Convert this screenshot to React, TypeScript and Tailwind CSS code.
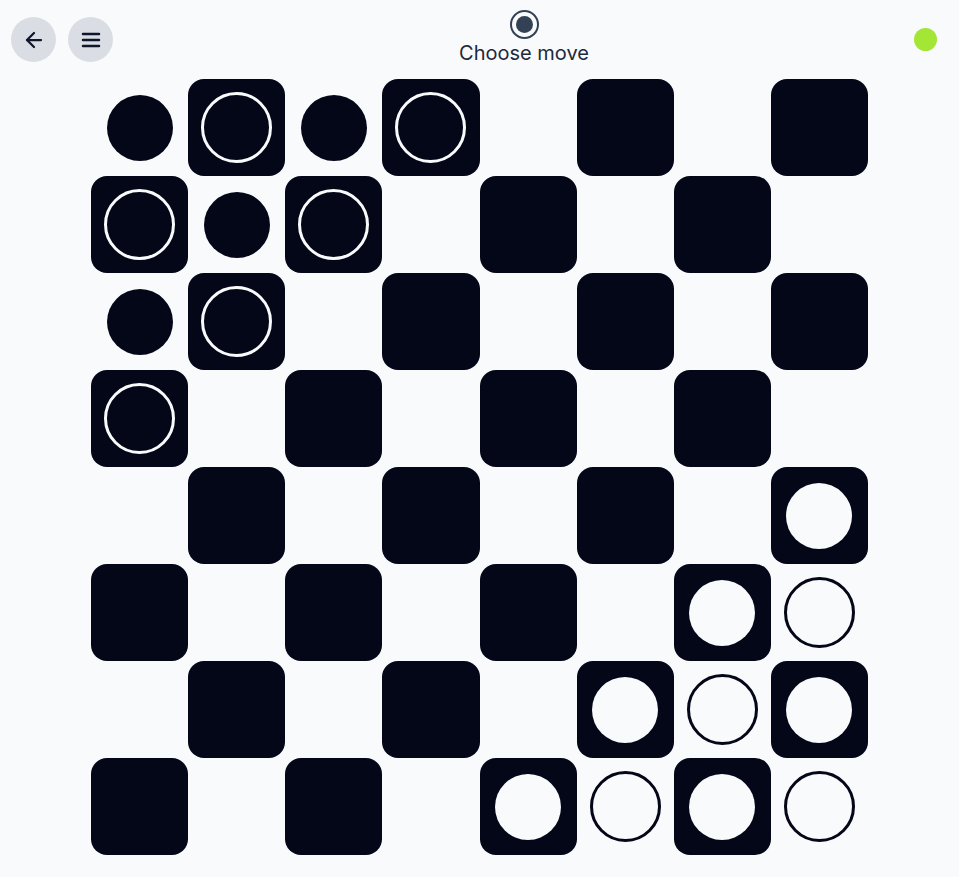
import { ArrowLeft } from "lucide-react";

type Piece = "b" | "w" | null;

// starting layout seen in the screenshot (row 0 = top)
const board: Piece[][] = [
  ["b", "b", "b", "b", null, null, null, null],
  ["b", "b", "b", null, null, null, null, null],
  ["b", "b", null, null, null, null, null, null],
  ["b", null, null, null, null, null, null, null],
  [null, null, null, null, null, null, null, "w"],
  [null, null, null, null, null, null, "w", "w"],
  [null, null, null, null, null, "w", "w", "w"],
  [null, null, null, null, "w", "w", "w", "w"],
];

function Cell({ piece, dark }: { piece: Piece; dark: boolean }) {
  let inner = null;
  if (piece) {
    const same = (piece === "b") === dark;
    if (same) {
      inner = (
        <div
          className={
            "h-[71px] w-[71px] rounded-full border-[3px] " +
            (dark ? "border-[#f8fafc]" : "border-[#030718]")
          }
        />
      );
    } else {
      inner = (
        <div
          className={
            "h-[66px] w-[66px] rounded-full " + (dark ? "bg-[#f8fafc]" : "bg-[#030718]")
          }
        />
      );
    }
  }
  return (
    <div
      className={
        "flex h-[97px] w-full items-center justify-center rounded-2xl " +
        (dark ? "bg-[#030718]" : "")
      }
    >
      {inner}
    </div>
  );
}

export default function App() {
  return (
    <div className="min-h-[877px] w-full bg-[#f8fafc] font-['Inter',sans-serif] text-[#0f172a]">
      {/* Header */}
      <div className="flex h-[79px] items-start px-[11px]">
        <div className="mr-[21px] mt-[17px] flex gap-3">
          <button className="flex h-[45px] w-[45px] items-center justify-center rounded-full bg-[#dadde3]">
            <ArrowLeft size={24} strokeWidth={2.25} />
          </button>
          <button className="flex h-[45px] w-[45px] items-center justify-center rounded-full bg-[#dadde3]">
            <svg width="24" height="24" viewBox="0 0 24 24" fill="none" stroke="currentColor" strokeWidth="2.5" strokeLinecap="round">
              <path d="M4 6h16M4 12h16M4 18h16" />
            </svg>
          </button>
        </div>
        <div className="flex flex-1 flex-col items-center pt-[10px]">
          <div className="flex h-[29px] w-[29px] items-center justify-center rounded-full border-2 border-[#334155]">
            <div className="h-[17px] w-[17px] rounded-full bg-[#334155]" />
          </div>
          <div className="text-xl leading-7 text-[#1e293b]">Choose move</div>
        </div>
        <div className="mr-[11px] mt-[28px] h-[23px] w-[23px] rounded-full bg-[#a3e635]" />
      </div>

      {/* Board */}
      <div className="mx-auto grid w-[777px] grid-cols-8">
        {board.map((row, r) =>
          row.map((p, c) => <Cell key={r + "-" + c} piece={p} dark={(r + c) % 2 === 1} />)
        )}
      </div>
    </div>
  );
}
